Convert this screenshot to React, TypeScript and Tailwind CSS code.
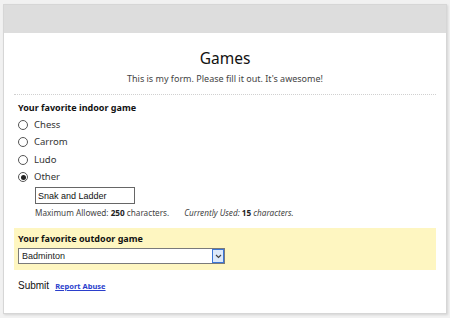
import React from "react";

const games = ["Chess", "Carrom", "Ludo", "Other"];

function Radio({ checked }: { checked?: boolean }) {
  return (
    <span className="flex h-[10px] w-[10px] items-center justify-center rounded-full border border-[#555] bg-white">
      {checked && <span className="h-[5px] w-[5px] rounded-full bg-[#222]" />}
    </span>
  );
}

export default function App() {
  return (
    <div className="h-[318px] bg-[#f1f1f1] pt-[4px] pl-[3px] pr-[3px] pb-[4px] font-['Noto_Sans',sans-serif] text-[#222]">
      <div className="h-[310px] border border-[#d6d6d6] bg-white shadow-[1px_1px_2px_rgba(0,0,0,0.12)]">
        <div className="h-[28px] bg-[#dddddd]" />
        <div className="px-[10px]">
          <h1 className="mt-[15px] text-center text-[15.5px] leading-[20px] text-[#111]">Games</h1>
          <p className="mt-[5px] text-center text-[9px] leading-[12px] text-[#444]">
            This is my form. Please fill it out. It's awesome!
          </p>
          <div className="mt-[9px] border-t border-dotted border-[#d0d0d0]" />

          <div className="px-[4px]">
            <div className="mt-[7px] text-[9px] font-bold leading-[12px] text-[#111]">Your favorite indoor game</div>
            <div className="mt-[2px] flex flex-col">
              {games.map((g) => (
                <label key={g} className="flex h-[17.5px] items-center gap-[6px] text-[9.5px] text-[#333]">
                  <Radio checked={g === "Other"} />
                  {g}
                </label>
              ))}
            </div>
            <div className="ml-[17px] mt-[1px]">
              <input
                readOnly
                value="Snak and Ladder"
                className="block h-[17px] w-[100px] border border-[#666] px-[2px] font-['Liberation_Sans',sans-serif] text-[9px] text-[#111] outline-none"
              />
              <div className="mt-[4px] flex gap-[15px] text-[8.2px] leading-[10px] text-[#444]">
                <span>
                  Maximum Allowed: <b className="text-[#222]">250</b> characters.
                </span>
                <span className="italic">
                  Currently Used: <b className="not-italic text-[#222]">15</b> characters.
                </span>
              </div>
            </div>
          </div>

          <div className="mt-[10px] bg-[#fef6c1] px-[4px] pt-[5px] pb-[6px]">
            <div className="text-[9px] font-bold leading-[12px] text-[#111]">Your favorite outdoor game</div>
            <div className="mt-[3px] flex h-[16px] w-[207px] border border-[#7a7a7a] bg-white">
              <span className="flex-1 px-[3px] font-['Liberation_Sans',sans-serif] text-[9px] leading-[14px] text-[#222]">
                Badminton
              </span>
              <span className="flex w-[12px] items-center justify-center border border-[#3b76d6] bg-[#dce9fb]">
                <svg width="7" height="5" viewBox="0 0 7 5">
                  <path d="M1 1 L3.5 3.5 L6 1" fill="none" stroke="#444" strokeWidth="1.2" />
                </svg>
              </span>
            </div>
          </div>

          <div className="mt-[8px] flex items-baseline gap-[6px] px-[4px]">
            <span className="font-['Liberation_Sans',sans-serif] text-[10px] text-[#111]">Submit</span>
            <a href="#" className="text-[7.5px] font-bold text-[#2b3fcc] underline">
              Report Abuse
            </a>
          </div>
        </div>
      </div>
    </div>
  );
}
